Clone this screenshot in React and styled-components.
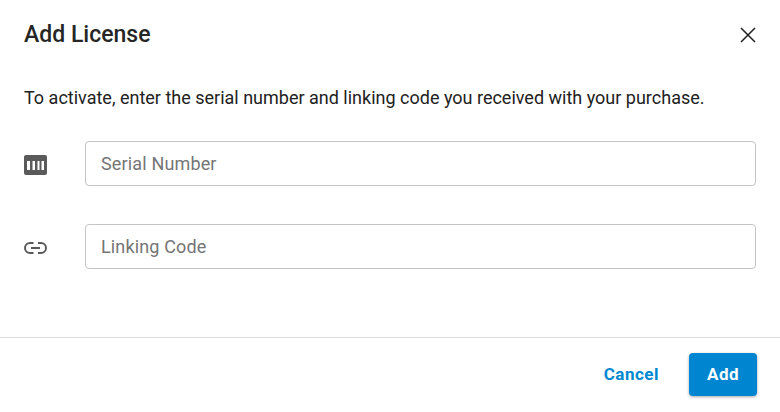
import React from 'react';
import styled, { createGlobalStyle } from 'styled-components';

const GlobalStyle = createGlobalStyle`
  html, body {
    margin: 0;
    padding: 0;
    background: #fff;
  }
  * {
    box-sizing: border-box;
  }
`;

const Dialog = styled.div`
  display: flex;
  flex-direction: column;
  width: 780px;
  height: 412px;
  background: #fff;
  font-family: Roboto, sans-serif;
  color: #212121;
  overflow: hidden;
`;

const Header = styled.header`
  display: flex;
  justify-content: space-between;
  align-items: center;
  height: 68px;
  padding: 2px 24px 0;
`;

const Title = styled.h1`
  margin: 0;
  font-size: 23px;
  font-weight: 500;
  line-height: 28px;
  color: #262626;
`;

const CloseButton = styled.button`
  display: flex;
  padding: 0;
  border: none;
  background: none;
  color: #212121;
`;

const Body = styled.div`
  display: flex;
  flex: 1;
  flex-direction: column;
  padding: 20px 24px 0;
`;

const Intro = styled.p`
  margin: 0 0 33px;
  font-size: 18px;
  line-height: 20px;
  color: #212121;
`;

const Fields = styled.div`
  display: flex;
  flex-direction: column;
  gap: 38px;
`;

const FieldRow = styled.div`
  display: flex;
  align-items: center;
`;

const IconSlot = styled.div`
  display: flex;
  flex: 0 0 61px;
  padding-top: 2px;
  color: #5a5a5a;
`;

const Input = styled.input`
  flex: 1;
  height: 45px;
  padding: 0 15px;
  border: 1px solid #c4c4c4;
  border-radius: 4px;
  font-family: inherit;
  font-size: 18px;
  letter-spacing: 0.15px;
  color: #212121;
  outline: none;

  &::placeholder {
    color: #757575;
    opacity: 1;
  }
`;

const Footer = styled.footer`
  display: flex;
  justify-content: flex-end;
  align-items: center;
  gap: 30px;
  height: 75px;
  padding: 0 23px 2px 0;
  border-top: 1px solid #dcdcdc;
`;

const Button = styled.button`
  height: 43px;
  padding: 0;
  border: none;
  border-radius: 4px;
  font-family: inherit;
  font-size: 17px;
  font-weight: 700;
  letter-spacing: 0.5px;
  color: ${(p) => (p.$primary ? '#fff' : '#0088d1')};
  background: ${(p) => (p.$primary ? '#0086d1' : 'transparent')};
  width: ${(p) => (p.$primary ? '68px' : 'auto')};
  box-shadow: ${(p) => (p.$primary ? '0 1px 3px rgba(0, 0, 0, 0.35)' : 'none')};
`;

const BarcodeIcon = () => (
  <svg width="23" height="20" viewBox="0 0 23 20">
    <path
      fill="currentColor"
      fillRule="evenodd"
      d="M2 0h19a2 2 0 0 1 2 2v16a2 2 0 0 1-2 2H2a2 2 0 0 1-2-2V2a2 2 0 0 1 2-2zM3 6v9h3V6zM8.500 6v9h2.500V6zM13.500 6v9h2V6zM17.500 6v9h2.500V6z"
    />
  </svg>
);

const LinkIcon = () => (
  <svg width="23" height="15" viewBox="0 0 23 15" fill="none" stroke="currentColor" strokeWidth="2">
    <path d="M9.500 3H6a5 5 0 0 0 0 10h3.500" />
    <path d="M14 3h3a5 5 0 0 1 0 10h-3" />
    <path d="M7 8h9" />
  </svg>
);

const CloseIcon = () => (
  <svg width="16" height="16" viewBox="0 0 16 16" fill="none" stroke="currentColor" strokeWidth="1.500">
    <path d="M1 1l14 14M15 1L1 15" />
  </svg>
);

const App = () => {
  return (
    <Dialog>
      <GlobalStyle />
      <Header>
        <Title>Add License</Title>
        <CloseButton aria-label="Close">
          <CloseIcon />
        </CloseButton>
      </Header>
      <Body>
        <Intro>To activate, enter the serial number and linking code you received with your purchase.</Intro>
        <Fields>
          <FieldRow>
            <IconSlot>
              <BarcodeIcon />
            </IconSlot>
            <Input placeholder="Serial Number" />
          </FieldRow>
          <FieldRow>
            <IconSlot>
              <LinkIcon />
            </IconSlot>
            <Input placeholder="Linking Code" />
          </FieldRow>
        </Fields>
      </Body>
      <Footer>
        <Button>Cancel</Button>
        <Button $primary>Add</Button>
      </Footer>
    </Dialog>
  );
};

export default App;
